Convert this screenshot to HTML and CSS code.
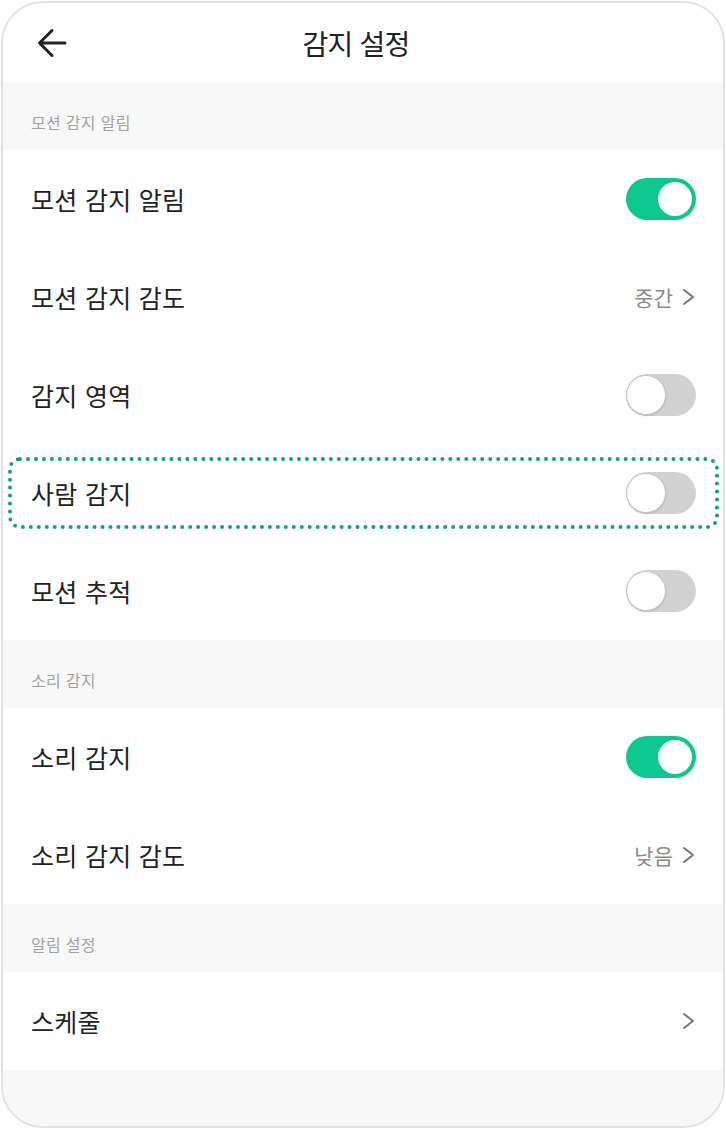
FILE: index.html
```html
<!DOCTYPE html>
<html lang="ko">
<head>
<meta charset="utf-8">
<title>감지 설정</title>
<link rel="stylesheet" href="styles.css">
</head>
<body>
<div class="phone">
  <header class="topbar">
    <button class="back" aria-label="뒤로">
      <svg width="30" height="30" viewBox="0 0 30 30"><path d="M28 15H3M15 2.5L2.5 15L15 27.5" fill="none" stroke="#222" stroke-width="3" stroke-linecap="round" stroke-linejoin="round"/></svg>
    </button>
    <h1 class="title">감지 설정</h1>
  </header>

  <div class="section-label">모션 감지 알림</div>
  <div class="row"><span class="label">모션 감지 알림</span><span class="switch on"></span></div>
  <div class="row"><span class="label">모션 감지 감도</span><span class="value">중간<svg class="chev" width="14" height="18" viewBox="0 0 14 18"><path d="M2 2l9 7-9 7" fill="none" stroke="#777" stroke-width="2" stroke-linecap="round" stroke-linejoin="round"/></svg></span></div>
  <div class="row"><span class="label">감지 영역</span><span class="switch"></span></div>
  <div class="row focused"><span class="label">사람 감지</span><span class="switch"></span><span class="focus-ring"></span></div>
  <div class="row"><span class="label">모션 추적</span><span class="switch"></span></div>

  <div class="section-label">소리 감지</div>
  <div class="row"><span class="label">소리 감지</span><span class="switch on"></span></div>
  <div class="row"><span class="label">소리 감지 감도</span><span class="value">낮음<svg class="chev" width="14" height="18" viewBox="0 0 14 18"><path d="M2 2l9 7-9 7" fill="none" stroke="#777" stroke-width="2" stroke-linecap="round" stroke-linejoin="round"/></svg></span></div>

  <div class="section-label">알림 설정</div>
  <div class="row"><span class="label">스케줄</span><span class="value"><svg class="chev" width="14" height="18" viewBox="0 0 14 18"><path d="M2 2l9 7-9 7" fill="none" stroke="#777" stroke-width="2" stroke-linecap="round" stroke-linejoin="round"/></svg></span></div>

  <div class="filler"></div>
</div>
</body>
</html>
```

FILE: styles.css
```css
html, body {
  margin: 0;
  padding: 0;
  background: #ffffff;
}
body {
  font-family: "Noto Sans CJK KR", "Noto Sans", sans-serif;
  padding: 1px;
}
.phone {
  box-sizing: border-box;
  width: 724px;
  height: 1127px;
  border: 2px solid #e2e2e2;
  border-radius: 42px;
  overflow: hidden;
  display: flex;
  flex-direction: column;
  background: #fff;
}
.topbar {
  height: 79px;
  flex: none;
  display: flex;
  align-items: center;
  padding: 0 78px 0 34px;
}
.back {
  width: 30px;
  height: 30px;
  padding: 0;
  border: 0;
  background: none;
  display: flex;
}
.title {
  flex: 1;
  margin: 0;
  text-align: center;
  font-size: 28px;
  font-weight: 400;
  color: #222;
  letter-spacing: -0.8px;
}
.section-label {
  height: 68px;
  flex: none;
  box-sizing: border-box;
  background: #f8f8f8;
  display: flex;
  align-items: flex-end;
  padding: 0 0 16px 28px;
  font-size: 16px;
  letter-spacing: 0.3px;
  color: #a2a2a2;
}
.row {
  position: relative;
  height: 98px;
  flex: none;
  display: flex;
  align-items: center;
  justify-content: space-between;
  padding: 0 27px 0 28px;
}
.label {
  font-size: 25px;
  color: #222;
  letter-spacing: 0.3px;
}
.value {
  display: flex;
  align-items: center;
  gap: 9px;
  font-size: 21px;
  color: #8a8a8a;
}
.chev {
  display: block;
}
.switch {
  position: relative;
  width: 70px;
  height: 42px;
  border-radius: 21px;
  background: #d2d2d2;
  flex: none;
}
.switch::after {
  content: "";
  position: absolute;
  left: 0;
  top: 1px;
  width: 38px;
  height: 38px;
  border-radius: 50%;
  background: #fff;
  border: 1px solid #c4c4c4;
  box-shadow: 0 1px 2px rgba(0,0,0,0.12);
}
.switch.on {
  background: #0dc88e;
}
.switch.on::after {
  left: auto;
  right: 4px;
  top: 4px;
  width: 34px;
  height: 34px;
  border: 0;
  box-shadow: none;
}
.focus-ring {
  position: absolute;
  left: 5px;
  right: 4px;
  top: 13px;
  bottom: 13px;
  border: 4px dotted #13a079;
  border-radius: 12px;
  pointer-events: none;
}
.filler {
  flex: 1;
  background: #f8f8f8;
}
```
